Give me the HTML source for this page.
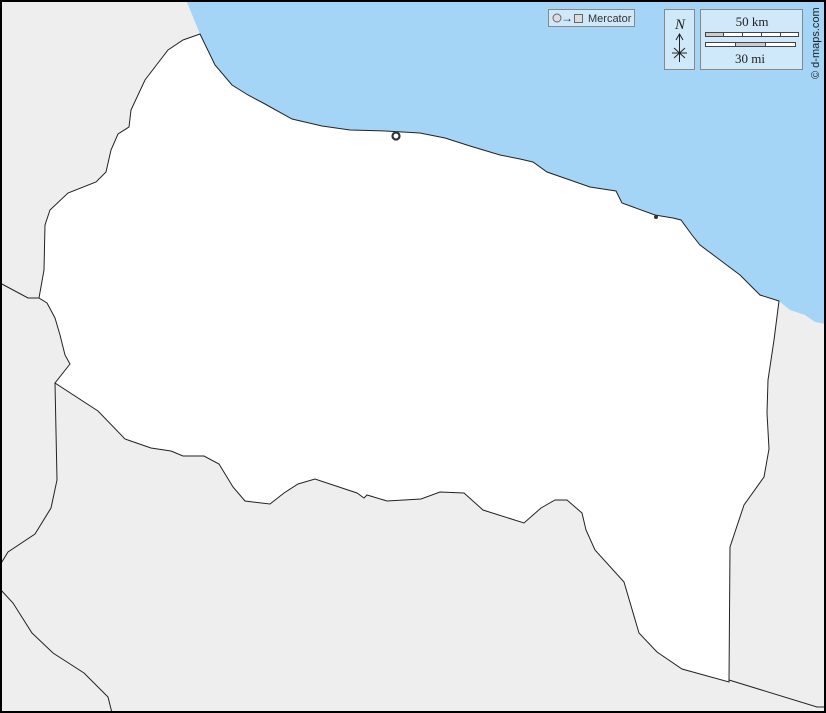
<!DOCTYPE html>
<html><head><meta charset="utf-8"><style>
html,body{margin:0;padding:0;background:#000}
svg{display:block}
</style></head><body>
<svg width="826" height="713" viewBox="0 0 826 713" xmlns="http://www.w3.org/2000/svg">
<rect x="0" y="0" width="826" height="713" fill="#eeeeee"/>
<path d="M186,0 L200,34 L215,65 L232,85 L248,95 L265,104 L292,119 L322,126 L350,130 L385,131 L420,133 L445,138 L470,146 L500,155 L520,159 L533,162 L547,172 L590,187 L616,191 L622,203 L655,215 L673,218 L681,220 L692,235 L700,245 L720,260 L740,275 L760,295 L779,301 L790,310 L805,315 L815,322 L826,324 L826,0 Z" fill="#a5d5f6"/>
<path d="M200,34 L215,65 L232,85 L248,95 L265,104 L292,119 L322,126 L350,130 L385,131 L420,133 L445,138 L470,146 L500,155 L520,159 L533,162 L547,172 L590,187 L616,191 L622,203 L655,215 L673,218 L681,220 L692,235 L700,245 L720,260 L740,275 L760,295 L779,301 L774,340 L768,380 L767,413 L769,449 L764,477 L744,505 L730,547 L729,682 L682,669 L657,652 L639,633 L624,582 L595,550 L586,530 L582,513 L567,500 L555,500 L541,508 L524,523 L483,510 L464,493 L440,492 L421,499 L387,501 L367,495 L364,498 L357,493 L315,479 L298,484 L284,493 L270,504 L245,501 L233,487 L219,464 L204,456 L183,456 L171,451 L151,448 L125,439 L98,411 L55,383 L70,364 L65,355 L60,335 L55,318 L47,303 L39,298 L44,270 L45,225 L50,210 L68,193 L96,182 L106,172 L111,150 L118,134 L129,127 L131,110 L145,80 L168,50 L183,40 Z" fill="#ffffff" stroke="#222" stroke-width="1"/>
<g fill="none" stroke="#222" stroke-width="1">
<path d="M0,283 L28,298 L39,298"/>
<path d="M55,383 L57,480 L51,508 L35,534 L8,552 L0,565"/>
<path d="M0,589 L13,603 L32,633 L53,653 L84,673 L108,697 L112,713"/>
<path d="M729,680 L817,707 L826,707"/>
</g>
<circle cx="396" cy="136" r="3.5" fill="#fff" stroke="#333" stroke-width="2.2"/>
<circle cx="656" cy="217" r="2" fill="#333"/>
<rect x="548.5" y="9.5" width="86" height="17" fill="#cfe9fb" stroke="#888"/>
<circle cx="557" cy="18" r="4" fill="#ddd" stroke="#666"/>
<text x="561" y="22" font-family="Liberation Sans, sans-serif" font-size="12" fill="#333">→</text>
<rect x="574.5" y="14.5" width="8" height="8" fill="#ddd" stroke="#666"/>
<text x="588" y="22" font-family="Liberation Sans, sans-serif" font-size="11" fill="#333">Mercator</text>
<rect x="664.5" y="9.5" width="30" height="60" fill="#cfe9fb" stroke="#888"/>
<text x="680" y="29" text-anchor="middle" font-family="Liberation Serif, serif" font-style="italic" font-size="15" fill="#222">N</text>
<g stroke="#222" stroke-width="1" fill="none">
<path d="M679.5,62 L679.5,35 M676,40 L679.5,34 L683,40"/>
<path d="M672,53 L687,53 M674,48 L685,58 M685,48 L674,58"/>
</g>
<rect x="700.5" y="9.5" width="102" height="60" fill="#cfe9fb" stroke="#888"/>
<text x="752" y="26" text-anchor="middle" font-family="Liberation Serif, serif" font-size="13" fill="#222">50 km</text>
<rect x="705.5" y="32.5" width="93" height="4" fill="#fff" stroke="#444"/>
<rect x="705.5" y="32.5" width="18" height="4" fill="#ccc" stroke="#444"/>
<path d="M742.5,32 V37 M761.5,32 V37 M780.5,32 V37" stroke="#444"/>
<rect x="705.5" y="42.5" width="90" height="4" fill="#fff" stroke="#444"/>
<rect x="735.5" y="42.5" width="30" height="4" fill="#ccc" stroke="#444"/>
<text x="750" y="63" text-anchor="middle" font-family="Liberation Serif, serif" font-size="13" fill="#222">30 mi</text>
<text transform="translate(819,79) rotate(-90)" font-family="Liberation Sans, sans-serif" font-size="11" fill="#222">© d-maps.com</text>
<rect x="1" y="1" width="824" height="711" fill="none" stroke="#000" stroke-width="2"/>
</svg>
</body></html>
